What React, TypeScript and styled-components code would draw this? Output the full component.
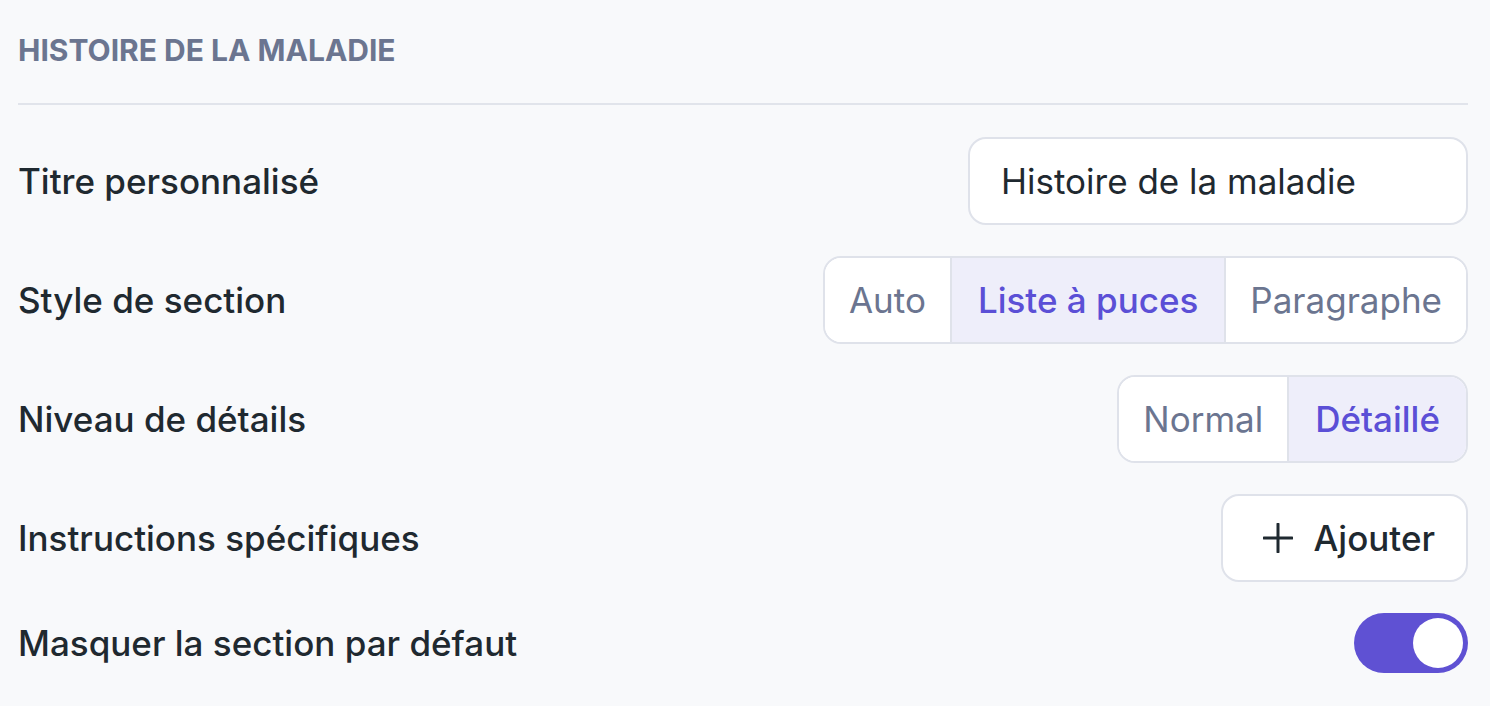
import styled, { createGlobalStyle } from "styled-components";

const GlobalStyle = createGlobalStyle`
  body {
    margin: 0;
    background: #f8f9fb;
    font-family: Inter, "Noto Sans", sans-serif;
    color: #1f2930;
  }
`;

const Panel = styled.div`
  padding: 32px 22px 0 18px;
  display: flex;
  flex-direction: column;
`;

const Heading = styled.h2`
  margin: 0;
  font-size: 30px;
  line-height: 36px;
  font-weight: 700;
  color: #6b7590;
  text-transform: uppercase;
`;

const Divider = styled.div`
  height: 2px;
  background: #e1e4eb;
  margin: 35px 0 32px;
`;

const Rows = styled.div`
  display: flex;
  flex-direction: column;
  gap: 31px;
`;

const Row = styled.div<{ $short?: boolean }>`
  display: flex;
  align-items: center;
  justify-content: space-between;
  height: ${(p) => (p.$short ? "60px" : "88px")};
`;

const Label = styled.span`
  font-size: 35px;
  font-weight: 500;
  color: #1f2930;
`;

const TextInput = styled.input`
  box-sizing: border-box;
  width: 500px;
  height: 88px;
  border: 2px solid #dfe2ea;
  border-radius: 18px;
  background: #fff;
  padding: 0 31px;
  font-family: inherit;
  font-size: 35px;
  color: #1f2930;
  outline: none;
`;

const Segmented = styled.div`
  display: flex;
  height: 88px;
  box-sizing: border-box;
  border: 2px solid #dfe2ea;
  border-radius: 18px;
  background: #fff;
  overflow: hidden;
`;

const Segment = styled.button<{ $active?: boolean }>`
  border: none;
  border-left: 2px solid #dfe2ea;
  padding: 0 ${(p) => (p.$active ? "26px" : "24px")};
  font-family: inherit;
  font-size: 35px;
  font-weight: ${(p) => (p.$active ? 500 : 400)};
  color: ${(p) => (p.$active ? "#5b4fd6" : "#6b7590")};
  background: ${(p) => (p.$active ? "#eeeefa" : "#fff")};
  cursor: pointer;
  &:first-child {
    border-left: none;
  }
`;

const AddButton = styled.button`
  display: flex;
  align-items: center;
  gap: 21px;
  box-sizing: border-box;
  height: 88px;
  padding: 0 31px 0 40px;
  border: 2px solid #dfe2ea;
  border-radius: 18px;
  background: #fff;
  font-family: inherit;
  font-size: 35px;
  font-weight: 500;
  color: #1f2930;
  cursor: pointer;
`;

const Track = styled.div<{ $on?: boolean }>`
  box-sizing: border-box;
  width: 114px;
  height: 60px;
  border-radius: 30px;
  padding: 5px;
  display: flex;
  justify-content: ${(p) => (p.$on ? "flex-end" : "flex-start")};
  background: ${(p) => (p.$on ? "#5f51d3" : "#d5d9e2")};
`;

const Knob = styled.div`
  width: 50px;
  height: 50px;
  border-radius: 50%;
  background: #fff;
`;

const PlusIcon = () => (
  <svg width="30" height="30" viewBox="0 0 30 30" fill="none">
    <path d="M15 1v28M1 15h28" stroke="#1f2930" strokeWidth="3" strokeLinecap="round" />
  </svg>
);

const App = () => {
  return (
    <>
      <GlobalStyle />
      <Panel>
        <Heading>Histoire de la maladie</Heading>
        <Divider />
        <Rows>
          <Row>
            <Label>Titre personnalisé</Label>
            <TextInput defaultValue="Histoire de la maladie" />
          </Row>
          <Row>
            <Label>Style de section</Label>
            <Segmented>
              <Segment>Auto</Segment>
              <Segment $active>Liste à puces</Segment>
              <Segment>Paragraphe</Segment>
            </Segmented>
          </Row>
          <Row>
            <Label>Niveau de détails</Label>
            <Segmented>
              <Segment>Normal</Segment>
              <Segment $active>Détaillé</Segment>
            </Segmented>
          </Row>
          <Row>
            <Label>Instructions spécifiques</Label>
            <AddButton>
              <PlusIcon />
              Ajouter
            </AddButton>
          </Row>
          <Row $short>
            <Label>Masquer la section par défaut</Label>
            <Track $on>
              <Knob />
            </Track>
          </Row>
        </Rows>
      </Panel>
    </>
  );
};

export default App;
